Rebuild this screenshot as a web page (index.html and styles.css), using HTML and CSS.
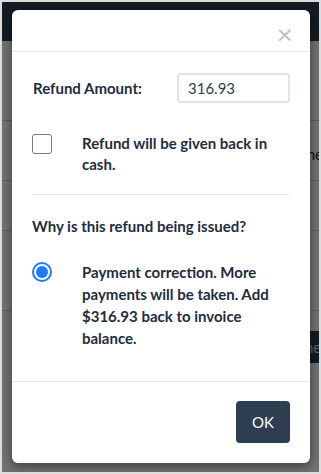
FILE: index.html
```html
<!DOCTYPE html>
<html>
<head>
<meta charset="utf-8">
<link rel="stylesheet" href="styles.css">
</head>
<body>
<div class="frame">
  <div class="page">
    <div class="navbar"></div>
    <div class="row r1"></div>
    <div class="row r2"><span class="th-left">T</span><span class="th-right">ne</span></div>
    <div class="row r3"><span class="link">$</span></div>
    <div class="row r4"></div>
    <div class="row r5"></div>
    <div class="btnrow"><span class="darkbtn">ne</span></div>
  </div>
  <div class="backdrop"></div>
  <div class="modal">
    <div class="modal-header">
      <span class="close">&times;</span>
    </div>
    <div class="modal-body">
      <div class="amount-row">
        <label class="label">Refund Amount:</label>
        <div class="input">316.93</div>
      </div>
      <div class="option">
        <span class="checkbox"></span>
        <span class="option-text">Refund will be given back in cash.</span>
      </div>
      <hr class="divider">
      <div class="question">Why is this refund being issued?</div>
      <div class="option radio-option">
        <span class="radio"><span class="dot"></span></span>
        <span class="option-text">Payment correction. More payments will be taken. Add $316.93 back to invoice balance.</span>
      </div>
    </div>
    <div class="modal-footer">
      <button class="ok">OK</button>
    </div>
  </div>
</div>
</body>
</html>
```
FILE: styles.css
```css
html, body {
  margin: 0;
  padding: 0;
}
body {
  width: 321px;
  height: 474px;
  overflow: hidden;
  font-family: Lato, "Noto Sans", sans-serif;
}
.frame {
  position: relative;
  width: 317px;
  height: 470px;
  border: 2px solid #dcdcdc;
  overflow: hidden;
  background: #fff;
}
.page {
  height: 100%;
  background: #fff;
}
.navbar {
  height: 39px;
  background: #2c3e50;
}
.row {
  position: relative;
  border-bottom: 1px solid #ccc;
  box-sizing: border-box;
  font-size: 15px;
  color: #222;
}
.r1 { height: 80px; }
.r2 { height: 60px; }
.r3 { height: 50px; }
.r4 { height: 80px; }
.r5 { height: 20px; border-bottom: none; }
.th-left {
  position: absolute;
  left: 12px;
  top: 22px;
  font-weight: 700;
  color: #111;
  font-size: 18px;
}
.th-right {
  position: absolute;
  right: -4px;
  top: 24px;
  color: #222;
}
.link {
  position: absolute;
  left: 16px;
  top: 16px;
  color: #1b4f8a;
}
.btnrow {
  display: flex;
  justify-content: flex-end;
}
.darkbtn {
  display: block;
  width: 14px;
  height: 32px;
  background: #2c3e50;
  color: #ddd;
  font-size: 15px;
  line-height: 32px;
  overflow: hidden;
  white-space: nowrap;
}
.backdrop {
  position: absolute;
  inset: 0;
  background: rgba(0, 0, 0, 0.55);
}
.modal {
  position: absolute;
  left: 10px;
  top: 8px;
  width: 298px;
  background: #fff;
  border-radius: 6px;
  box-shadow: 0 3px 12px rgba(0, 0, 0, 0.5);
  color: #1d2d40;
}
.modal-header {
  height: 41px;
  border-bottom: 1px solid #e5e5e5;
  display: flex;
  justify-content: flex-end;
  align-items: center;
  padding: 0 16px;
}
.close {
  font-family: "DejaVu Sans", sans-serif;
  font-size: 22px;
  color: #bdbdbd;
  line-height: 1;
  margin-top: 8px;
}
.modal-body {
  padding: 21px 20px 0 20px;
  font-size: 15px;
}
.amount-row {
  display: flex;
  align-items: center;
  justify-content: space-between;
}
.label {
  font-weight: 700;
  padding-left: 1px;
}
.input {
  width: 113px;
  height: 30px;
  box-sizing: border-box;
  border: 2px solid #dce4ec;
  border-radius: 3px;
  padding: 0 9px;
  line-height: 26px;
  font-size: 15px;
  color: #2c3e50;
}
.option {
  display: grid;
  grid-template-columns: 50px 1fr;
  margin-top: 30px;
  line-height: 21px;
  font-weight: 700;
}
.option-text {
  padding-right: 20px;
}
.checkbox {
  width: 20px;
  height: 20px;
  box-sizing: border-box;
  border: 1px solid #7a7a7a;
  border-radius: 3px;
  margin-top: 1px;
}
.divider {
  border: none;
  border-top: 1px solid #e6e9ec;
  margin: 19px 0 0 0;
}
.question {
  margin-top: 20px;
  line-height: 22px;
  font-weight: 700;
}
.radio-option {
  margin-top: 24px;
  line-height: 22px;
}
.radio-option .option-text {
  padding-right: 0;
}
.radio {
  width: 20px;
  height: 20px;
  box-sizing: border-box;
  border: 2px solid #1a7cff;
  border-radius: 50%;
  display: flex;
  align-items: center;
  justify-content: center;
  margin-top: 1px;
}
.dot {
  width: 12px;
  height: 12px;
  border-radius: 50%;
  background: #1a7cff;
}
.modal-footer {
  margin-top: 32px;
  border-top: 1px solid #e5e5e5;
  padding: 19px 20px 20px;
  display: flex;
  justify-content: flex-end;
}
.ok {
  width: 54px;
  height: 42px;
  border: none;
  border-radius: 4px;
  background: #2c3e50;
  color: #fff;
  font-family: Lato, "Noto Sans", sans-serif;
  font-size: 15px;
  padding: 0;
}
```
